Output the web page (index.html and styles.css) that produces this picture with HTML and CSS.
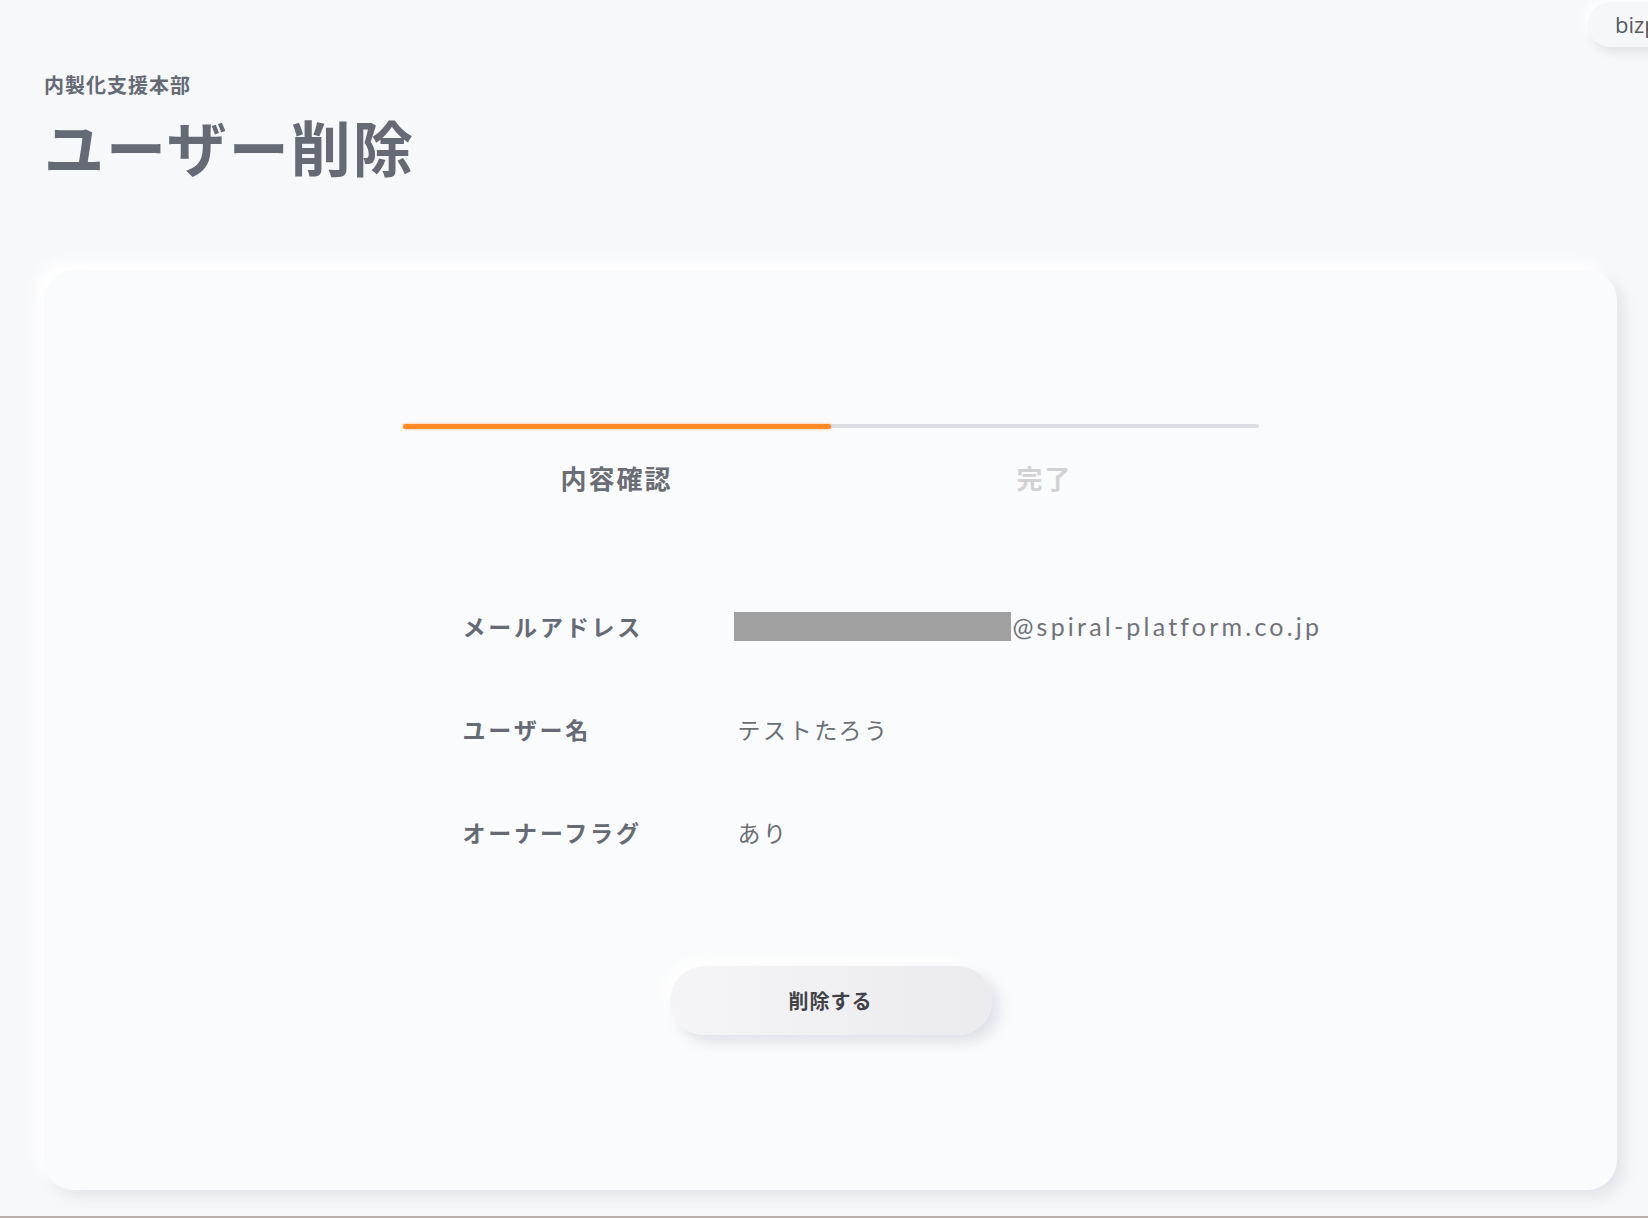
FILE: index.html
```html
<!DOCTYPE html>
<html lang="ja">
<head>
<meta charset="utf-8">
<title>ユーザー削除</title>
<link rel="stylesheet" href="styles.css">
</head>
<body>
  <div class="account-pill">bizplatform</div>
  <div class="page">
    <header class="page-head">
      <p class="dept">内製化支援本部</p>
      <h1 class="title">ユーザー削除</h1>
    </header>

    <main class="card">
      <div class="steps">
        <div class="track"><div class="track-fill"></div></div>
        <div class="step-labels">
          <span class="step step-active">内容確認</span>
          <span class="step">完了</span>
        </div>
      </div>

      <dl class="details">
        <div class="row">
          <dt>メールアドレス</dt>
          <dd class="email"><span class="mask"></span>@spiral-platform.co.jp</dd>
        </div>
        <div class="row">
          <dt>ユーザー名</dt>
          <dd>テストたろう</dd>
        </div>
        <div class="row">
          <dt>オーナーフラグ</dt>
          <dd>あり</dd>
        </div>
      </dl>

      <div class="actions">
        <button class="btn" type="button">削除する</button>
      </div>
    </main>
    <div class="bottom-rule"></div>
  </div>
</body>
</html>
```

FILE: styles.css
```css
html, body {
  margin: 0;
  padding: 0;
  overflow: hidden;
}

body {
  background: #f7f8fa;
  font-family: "Noto Sans CJK JP", "Noto Sans", sans-serif;
  color: #656a75;
  position: relative;
  height: 1218px;
}

/* account pill at the top-right corner, running past the edge */
.account-pill {
  position: absolute;
  top: 2px;
  left: 1588px;
  height: 45px;
  padding: 0 20px 0 27px;
  border-radius: 23px;
  background: #f6f7f9;
  box-shadow: 4px 5px 10px rgba(160, 165, 180, 0.28), -4px -4px 8px #ffffff;
  font-family: "Open Sans", "Liberation Sans", sans-serif;
  font-size: 22px;
  line-height: 45px;
  color: #555a60;
  white-space: nowrap;
}

.page {
  padding: 0 31px 0 44px;
}

.page-head {
  padding-top: 75px;
}

.dept {
  margin: 0;
  font-size: 20px;
  line-height: 20px;
  font-weight: 700;
  letter-spacing: 1px;
  color: #656a75;
}

.title {
  margin: 21px 0 0;
  font-size: 60px;
  line-height: 60px;
  font-weight: 700;
  letter-spacing: 2px;
  color: #656a75;
}

.card {
  margin-top: 94px;
  background: #fafbfc;
  border-radius: 30px;
  box-shadow: -9px -9px 14px #ffffff, 7px 7px 14px rgba(175, 180, 195, 0.28);
  padding: 155px 0 155px;
}

/* progress steps */
.steps {
  width: 856px;
  margin: 0 auto;
}

.track {
  height: 4px;
  border-radius: 2px;
  background: #dcdee3;
  position: relative;
}

.track-fill {
  width: 50%;
  height: 5px;
  margin-top: -1px;
  border-radius: 3px;
  background: #ff8a26;
  box-shadow: 0 0 3px rgba(255, 140, 40, 0.6);
}

.step-labels {
  display: flex;
  margin-top: 35px;
}

.step {
  flex: 1;
  text-align: center;
  font-size: 26px;
  line-height: 30px;
  font-weight: 700;
  letter-spacing: 2px;
  color: #d2d2d4;
}

.step-active {
  color: #6a6d75;
}

/* confirmation details */
.details {
  width: 796px;
  margin: 118px auto 0;
  padding-left: 60px;
}

.row {
  display: flex;
  align-items: center;
  height: 30px;
  margin-bottom: 73px;
}

.row:last-child {
  margin-bottom: 0;
}

.row dt {
  width: 271px;
  flex: none;
  font-size: 23px;
  line-height: 30px;
  font-weight: 700;
  letter-spacing: 2.8px;
  color: #656a75;
}

.row dd {
  margin: 0;
  padding-left: 4px;
  display: flex;
  align-items: center;
  white-space: nowrap;
  font-size: 23px;
  line-height: 30px;
  letter-spacing: 2.6px;
  color: #6b6e74;
}

.row dd.email {
  padding-left: 0;
  font-family: "Lato", "Open Sans", sans-serif;
  font-size: 25px;
  letter-spacing: 3.2px;
  color: #707379;
}

.mask {
  display: inline-block;
  width: 277px;
  height: 29px;
  margin-right: 2px;
  background: #a0a0a0;
}

.actions {
  display: flex;
  justify-content: center;
  margin-top: 119px;
}

.btn {
  width: 322px;
  height: 69px;
  border: none;
  border-radius: 35px;
  background: linear-gradient(90deg, #f5f5f7 0%, #ebebef 100%);
  box-shadow: 7px 7px 14px rgba(170, 176, 192, 0.35), -7px -7px 14px #ffffff;
  font-family: "Noto Sans CJK JP", "Noto Sans", sans-serif;
  font-size: 20px;
  font-weight: 700;
  letter-spacing: 1px;
  color: #404246;
  cursor: pointer;
}

.bottom-rule {
  margin: 26px -31px 0 -44px;
  height: 2px;
  background: #b8b1aa;
}
```
